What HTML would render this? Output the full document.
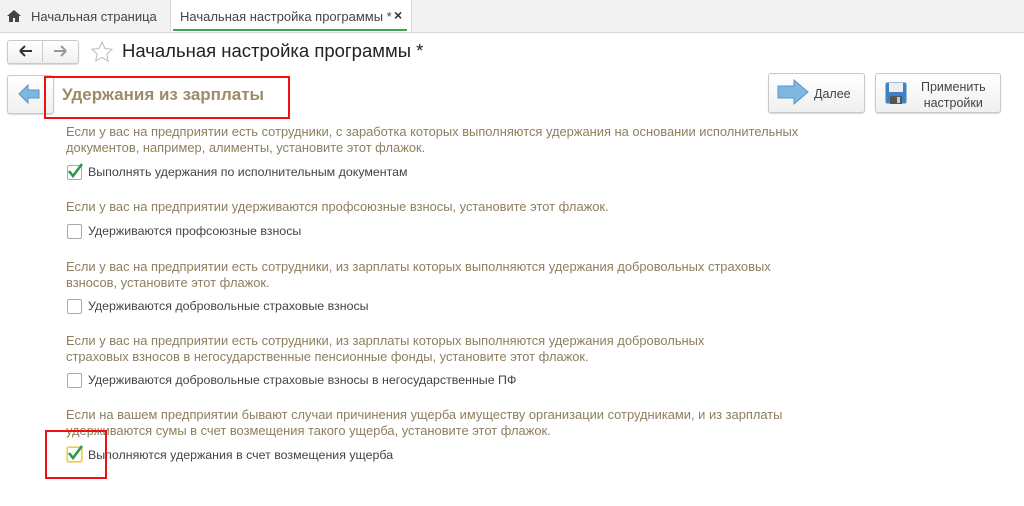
<!DOCTYPE html>
<html><head><meta charset="utf-8"><style>
body{margin:0;width:1024px;height:506px;background:#fff;font-family:"Liberation Sans",sans-serif;position:relative;overflow:hidden}
.a{position:absolute;white-space:nowrap}
.h{color:#8d7f5f;font-size:12.9px;left:66px}
.l{color:#444;font-size:12.4px;left:88px}
.cb{position:absolute;left:67px;width:13px;height:13px;border:1px solid #aaa;border-radius:2px;background:#fff}
.btn{position:absolute;border:1px solid #c8c8c8;border-radius:3px;background:linear-gradient(#fff,#f0f0f0);box-shadow:0 1px 1px rgba(0,0,0,.15)}
</style></head><body>
<div class="a" style="left:0;top:0;width:1024px;height:32px;background:#f2f2f2;border-bottom:1px solid #d8d8d8"></div>
<svg class="a" style="left:7px;top:10px" width="14" height="12" viewBox="0 0 14 12"><path d="M7 0L0 6h2v6h4V8h2v4h4V6h2z" fill="#444"/></svg>
<div class="a" style="left:31px;top:9px;font-size:13px;color:#444">Начальная страница</div>
<div class="a" style="left:170px;top:0;width:240px;height:32px;background:#fff;border-left:1px solid #d8d8d8;border-right:1px solid #d8d8d8"></div>
<div class="a" style="left:173px;top:29px;width:234px;height:2px;background:#3aa655"></div>
<div class="a" style="left:180px;top:9px;font-size:13px;color:#444">Начальная настройка программы *</div>
<div class="a" style="left:394px;top:7px;font-size:14px;color:#333;font-weight:bold">×</div>
<div class="btn" style="left:7px;top:40px;width:70px;height:22px"></div>
<div class="a" style="left:42px;top:41px;width:1px;height:21px;background:#ccc"></div>
<svg class="a" style="left:19px;top:45px" width="14" height="12"><path d="M1 6h12M1 6l5-5M1 6l5 5" stroke="#333" stroke-width="2" fill="none"/></svg>
<svg class="a" style="left:53px;top:45px" width="14" height="12"><path d="M1 6h12M13 6l-5-5M13 6l-5 5" stroke="#999" stroke-width="2" fill="none"/></svg>
<svg class="a" style="left:91px;top:41px" width="22" height="21" viewBox="0 0 22 21"><path d="M11 1l3 6.5 7 .8-5.2 4.8 1.5 7L11 16.5 4.7 20l1.5-7L1 8.3l7-.8z" fill="none" stroke="#bbb"/></svg>
<div class="a" style="left:122px;top:40px;font-size:18.5px;color:#222">Начальная настройка программы *</div>
<div class="btn" style="left:7px;top:75px;width:45px;height:37px"></div>
<svg class="a" style="left:18px;top:84px" width="22" height="20" viewBox="0 0 22 20"><path d="M1 10L10 1v5h11v8H10v5z" fill="#7fb7e0" stroke="#5a96c8"/></svg>
<div class="a" style="left:44px;top:76px;width:242px;height:39px;border:2px solid #ee1111"></div>
<div class="a" style="left:62px;top:85px;font-size:17px;font-weight:bold;color:#9b8b68">Удержания из зарплаты</div>
<div class="btn" style="left:768px;top:73px;width:95px;height:38px"></div>
<svg class="a" style="left:777px;top:79px" width="32" height="26" viewBox="0 0 32 26"><path d="M1 7h16V1l14 12-14 12v-6H1z" fill="#7fb7e0" stroke="#5a96c8"/></svg>
<div class="a" style="left:814px;top:87px;font-size:12.5px;color:#444">Далее</div>
<div class="btn" style="left:875px;top:73px;width:124px;height:38px"></div>
<svg class="a" style="left:885px;top:82px" width="22" height="22" viewBox="0 0 22 22"><rect x="0.5" y="0.5" width="21" height="21" rx="2" fill="#3c82c4"/><rect x="4" y="1" width="14" height="9" fill="#eee"/><rect x="5" y="14" width="12" height="8" fill="#555"/><rect x="12" y="15" width="3" height="6" fill="#ccc"/></svg>
<div class="a" style="left:921px;top:79px;font-size:12.5px;color:#444;text-align:center;line-height:16px">Применить<br>настройки</div>

<div class="a h" style="top:124px;line-height:16px">Если у вас на предприятии есть сотрудники, с заработка которых выполняются удержания на основании исполнительных<br>документов, например, алименты, установите этот флажок.</div>
<div class="cb" style="top:165px"></div><svg class="a" style="left:66px;top:162px" width="18" height="17"><path d="M3 9l4 5 9-12" stroke="#2a9a4a" stroke-width="2.6" fill="none"/></svg>
<div class="a l" style="top:165px">Выполнять удержания по исполнительным документам</div>

<div class="a h" style="top:199px">Если у вас на предприятии удерживаются профсоюзные взносы, установите этот флажок.</div>
<div class="cb" style="top:224px"></div>
<div class="a l" style="top:224px">Удерживаются профсоюзные взносы</div>

<div class="a h" style="top:259px;line-height:16px">Если у вас на предприятии есть сотрудники, из зарплаты которых выполняются удержания добровольных страховых<br>взносов, установите этот флажок.</div>
<div class="cb" style="top:299px"></div>
<div class="a l" style="top:299px">Удерживаются добровольные страховые взносы</div>

<div class="a h" style="top:333px;line-height:16px">Если у вас на предприятии есть сотрудники, из зарплаты которых выполняются удержания добровольных<br>страховых взносов в негосударственные пенсионные фонды, установите этот флажок.</div>
<div class="cb" style="top:373px"></div>
<div class="a l" style="top:373px">Удерживаются добровольные страховые взносы в негосударственные ПФ</div>

<div class="a h" style="top:407px;line-height:16px">Если на вашем предприятии бывают случаи причинения ущерба имуществу организации сотрудниками, и из зарплаты<br>удерживаются сумы в счет возмещения такого ущерба, установите этот флажок.</div>
<div class="cb" style="top:447px;border-color:#f0c94a;box-shadow:0 0 0 1px #f7e08a"></div><svg class="a" style="left:66px;top:444px" width="18" height="17"><path d="M3 9l4 5 9-12" stroke="#2a9a4a" stroke-width="2.6" fill="none"/></svg>
<div class="a l" style="top:448px">Выполняются удержания в счет возмещения ущерба</div>
<div class="a" style="left:45px;top:430px;width:58px;height:45px;border:2px solid #ee1111"></div>
</body></html>
